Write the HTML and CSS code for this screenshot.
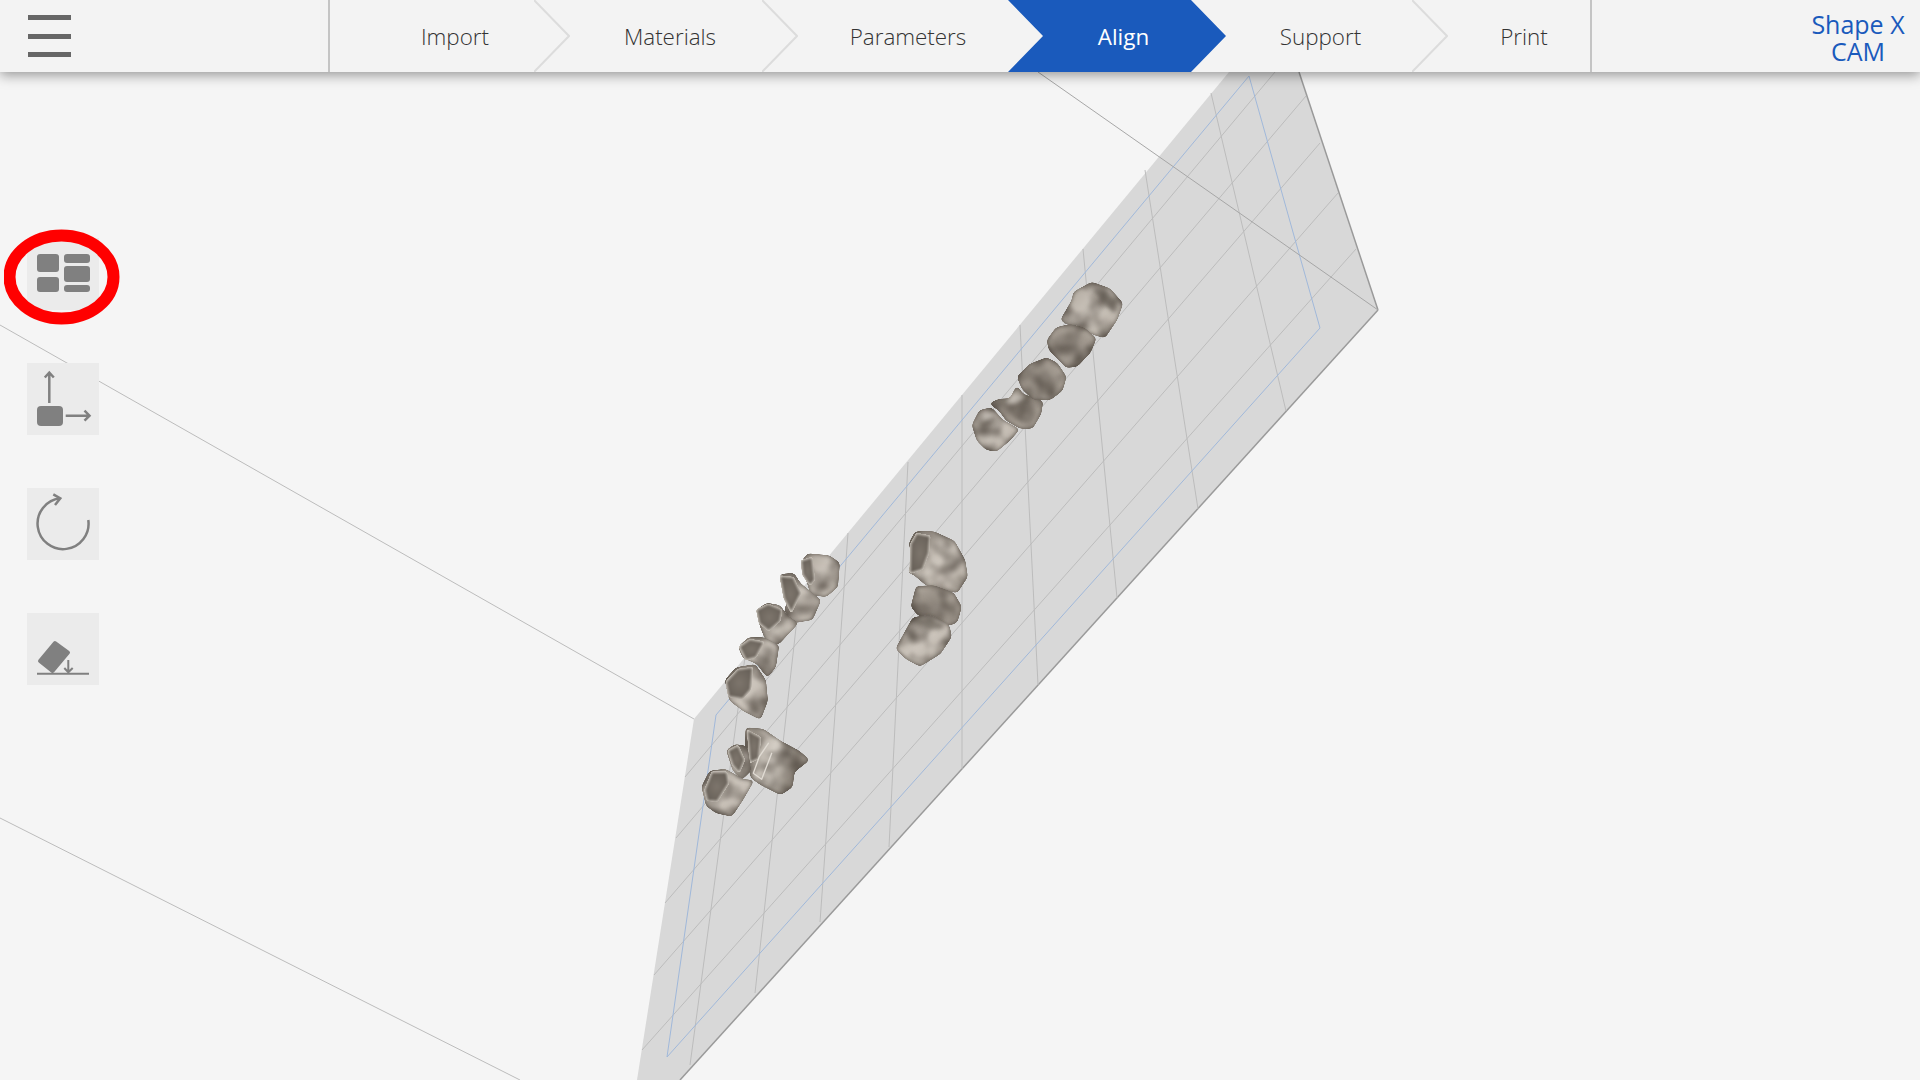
FILE: index.html
```html
<!DOCTYPE html>
<html lang="en">
  <head>
    <meta charset="UTF-8" />
    <title>Shape X CAM</title>
    <link rel="stylesheet" href="styles.css">
  </head>
  <body>
    <header class="topbar">
      <button class="menu-btn" aria-label="Menu">
        <span class="menu-bar"></span>
        <span class="menu-bar"></span>
        <span class="menu-bar"></span>
      </button>
      <nav class="steps">
        <div class="step step-import">Import</div>
        <svg class="chevron" viewBox="0 0 36 72"><polyline points="0,0 35,36 0,72" /></svg>
        <div class="step step-materials">Materials</div>
        <svg class="chevron" viewBox="0 0 36 72"><polyline points="0,0 35,36 0,72" /></svg>
        <div class="step step-parameters">Parameters</div>
        <div class="step step-align">Align</div>
        <div class="step step-support">Support</div>
        <svg class="chevron" viewBox="0 0 36 72"><polyline points="0,0 35,36 0,72" /></svg>
        <div class="step step-print">Print</div>
      </nav>
      <div class="brand"><div class="brand-name">Shape X CAM</div></div>
    </header>

    <!-- 3d scene -->
    <svg class="scene" viewBox="0 0 1920 1080">
      <defs>
        <!-- rounds the polygon corners, adds faint blotches and a dark inner edge -->
        <filter id="tooth" x="-15%" y="-15%" width="130%" height="130%" color-interpolation-filters="sRGB">
          <feGaussianBlur in="SourceGraphic" stdDeviation="6" result="blur" />
          <feColorMatrix in="blur" type="matrix" values="1 0 0 0 0  0 1 0 0 0  0 0 1 0 0  0 0 0 14 -6.500" result="shape" />
          <feTurbulence type="fractalNoise" baseFrequency="0.018" numOctaves="2" seed="11" result="noise" />
          <feColorMatrix in="noise" type="matrix" values="0 0 0 0 0.30  0 0 0 0 0.27  0 0 0 0 0.24  1.600 0 0 0 -0.550" result="spots" />
          <feGaussianBlur in="spots" stdDeviation="4" result="spotsSoft" />
          <feComposite in="spotsSoft" in2="shape" operator="in" result="blotch" />
          <feGaussianBlur in="shape" stdDeviation="7" result="edgeBlur" />
          <feColorMatrix in="edgeBlur" type="matrix" values="0 0 0 0 0.30  0 0 0 0 0.27  0 0 0 0 0.24  0 0 0 -0.850 0.850" result="edgeDark" />
          <feComposite in="edgeDark" in2="shape" operator="in" result="edge" />
          <feMerge result="all">
            <feMergeNode in="shape" />
            <feMergeNode in="blotch" />
            <feMergeNode in="edge" />
          </feMerge>
          <feGaussianBlur in="all" stdDeviation="1.200" />
        </filter>
        <filter id="hollow" x="-20%" y="-20%" width="140%" height="140%" color-interpolation-filters="sRGB">
          <feGaussianBlur in="SourceGraphic" stdDeviation="3" result="blur" />
          <feColorMatrix in="blur" type="matrix" values="1 0 0 0 0  0 1 0 0 0  0 0 1 0 0  0 0 0 12 -5.500" result="shape" />
          <feGaussianBlur in="shape" stdDeviation="1" />
        </filter>
        <filter id="soft" x="-40%" y="-40%" width="180%" height="180%"><feGaussianBlur stdDeviation="7" /></filter>
        <radialGradient id="toothA" cx="0.45" cy="0.5" r="0.65">
          <stop offset="0" stop-color="#8a8279" />
          <stop offset="0.65" stop-color="#a69e94" />
          <stop offset="1" stop-color="#bdb5ab" />
        </radialGradient>
        <linearGradient id="toothB" x1="0" y1="0" x2="1" y2="1">
          <stop offset="0" stop-color="#a69e94" />
          <stop offset="0.5" stop-color="#cdc6bd" />
          <stop offset="1" stop-color="#aea69c" />
        </linearGradient>
        <linearGradient id="toothC" x1="0" y1="0.2" x2="1" y2="0.5">
          <stop offset="0" stop-color="#a0988e" />
          <stop offset="0.45" stop-color="#d6d0c7" />
          <stop offset="0.8" stop-color="#888076" />
          <stop offset="1" stop-color="#aca49a" />
        </linearGradient>
        <radialGradient id="inside" cx="0.5" cy="0.5" r="0.6">
          <stop offset="0" stop-color="#7d756c" />
          <stop offset="1" stop-color="#665f57" />
        </radialGradient>
      </defs>

      <line class="axis" x1="0" y1="325" x2="694" y2="719" />
      <line class="axis" x1="0" y1="818" x2="520" y2="1080" />

      <polygon class="plate" points="1229,72 1299,72 1378,310 680,1080 637,1080 694,719" />
      <line class="plate-edge" x1="1299" y1="72" x2="1378" y2="310" />
      <line class="plate-edge" x1="1378" y1="310" x2="680" y2="1080" />

      <g class="grid">
        <line x1="642" y1="1050" x2="1356" y2="249" />
        <line x1="654" y1="975" x2="1338" y2="193" />
        <line x1="665" y1="903" x2="1320" y2="143" />
        <line x1="676" y1="838" x2="1306" y2="96" />
        <line x1="685" y1="777" x2="1275" y2="72" />
        <line x1="690" y1="1065" x2="745" y2="657" />
        <line x1="755" y1="993" x2="800" y2="592" />
        <line x1="820" y1="922" x2="848" y2="533" />
        <line x1="889" y1="847" x2="908" y2="462" />
        <line x1="962" y1="769" x2="962" y2="395" />
        <line x1="1038" y1="685" x2="1020" y2="325" />
        <line x1="1117" y1="598" x2="1083" y2="249" />
        <line x1="1198" y1="509" x2="1145" y2="170" />
        <line x1="1286" y1="411" x2="1211" y2="93" />
      </g>
      <polygon class="bounds" points="1249,76 1320,328 667,1057 716,715" />
      <line class="axis-dark" x1="1038" y1="72" x2="1378" y2="310" />

      <!-- back row -->
      <g transform="translate(960 270) scale(0.3333)">
        <polygon class="t-b" filter="url(#tooth)" points="340,65 395,35 450,55 490,100 472,150 435,205 400,195 350,165 322,165 300,150 318,120 335,90" />
        <polygon class="shade" filter="url(#soft)" points="400,55 470,90 462,130 425,90" />
        <polygon class="t-b" filter="url(#tooth)" points="35,465 58,420 95,412 130,450 180,478 150,512 110,545 78,540 50,512" />
        <polygon class="t-a" filter="url(#tooth)" points="150,385 170,345 190,372 250,392 244,432 218,476 180,476 138,452 118,424 85,400 118,386" />
        <polygon class="t-a" filter="url(#tooth)" points="170,320 208,282 260,262 292,278 320,320 308,362 272,390 220,390 186,358" />
        <polygon class="t-a" filter="url(#tooth)" points="260,210 288,172 330,162 372,172 410,205 392,248 352,290 318,294 288,262 266,240" />
        <polygon class="shine" filter="url(#soft)" points="70,425 105,430 90,450 65,452" />
        <polygon class="shine" filter="url(#soft)" points="160,365 195,380 170,400 140,400" />
      </g>

      <!-- left strip, bottom group, right group -->
      <g transform="translate(700 530) scale(0.3333)">
        <polygon class="t-b" filter="url(#tooth)" points="300,100 322,70 388,76 420,98 414,172 378,202 332,194 318,150" />
        <polygon class="cavity" filter="url(#hollow)" points="304,92 336,82 344,150 330,166 308,134" />

        <polygon class="t-b" filter="url(#tooth)" points="236,133 282,128 302,160 364,210 338,270 280,280 252,242 266,200" />
        <polygon class="cavity" filter="url(#hollow)" points="240,138 280,142 302,190 274,248 252,204" />

        <polygon class="t-b" filter="url(#tooth)" points="196,330 235,345 296,280 262,255 240,225 200,218 168,240 180,290" />
        <polygon class="cavity" filter="url(#hollow)" points="170,240 205,222 246,240 240,274 206,302 178,280" />

        <polygon class="t-b" filter="url(#tooth)" points="114,350 145,322 192,322 238,345 228,412 202,444 170,402 128,384" />
        <polygon class="cavity" filter="url(#hollow)" points="118,350 150,328 192,336 168,382 138,390" />

        <polygon class="t-b" filter="url(#tooth)" points="74,450 108,412 166,402 198,450 204,512 182,570 130,544 88,512" />
        <polygon class="cavity" filter="url(#hollow)" points="78,456 113,418 158,412 152,478 128,506 86,500" />

        <polygon class="t-c" filter="url(#tooth)" points="136,592 190,596 242,632 298,662 330,690 284,726 278,772 242,796 180,764 152,744 136,670" />
        <polygon class="cavity" filter="url(#hollow)" points="142,600 182,622 176,686 150,698" />
        <polyline class="ridge" points="205,640 178,680 160,730 185,748 215,670" />

        <polygon class="t-b" filter="url(#tooth)" points="78,660 105,642 142,648 154,722 126,750 98,722" />
        <polygon class="cavity" filter="url(#hollow)" points="84,662 114,646 134,690 118,728 98,706" />

        <polygon class="t-b" filter="url(#tooth)" points="4,770 28,722 76,716 132,748 164,750 128,812 96,860 48,850 18,828" />
        <polygon class="cavity" filter="url(#hollow)" points="14,780 36,726 80,726 86,760 52,814 22,812" />

        <polygon class="t-b" filter="url(#tooth)" points="626,40 645,4 702,4 764,32 796,90 804,140 772,190 720,178 680,168 640,134 622,128 638,90" />
        <polygon class="cavity" filter="url(#hollow)" points="632,42 650,10 690,18 686,70 668,118 630,130" />
        <polygon class="t-a" filter="url(#tooth)" points="648,168 702,166 762,188 786,230 772,278 745,288 700,264 655,258 632,230" />
        <polygon class="t-b" filter="url(#tooth)" points="586,356 638,262 690,254 748,284 756,320 722,372 660,410 618,388" />
        <polygon class="shade" filter="url(#soft)" points="640,270 690,262 740,292 690,300" />
      </g>
    </svg>

    <aside class="tools">
      <button class="tool tool-selected">
        <svg viewBox="0 0 72 72">
          <rect class="solid" x="10" y="16" width="22" height="18" rx="3" />
          <rect class="solid" x="10" y="39" width="22" height="15" rx="3" />
          <rect class="solid" x="37" y="16" width="26" height="9" rx="3" />
          <rect class="solid" x="37" y="28" width="26" height="16" rx="3" />
          <rect class="solid" x="37" y="47" width="26" height="7" rx="3" />
        </svg>
      </button>
      <button class="tool">
        <svg viewBox="0 0 72 72">
          <rect class="solid" x="10" y="43" width="26" height="20" rx="4" />
          <path class="stroke" d="M22.3 40V9.5M17.8 14.5l4.5-5 4.5 5" />
          <path class="stroke" d="M38.7 52.7H62M57.5 47.7l5 5-5 5" />
        </svg>
      </button>
      <button class="tool">
        <svg viewBox="0 0 72 72">
          <path class="stroke" d="M61.3 32A25.5 25.5 0 1 1 33 10.3" />
          <path class="stroke" d="M26.3 6.3l7 4-5.300 6.700" />
        </svg>
      </button>
      <button class="tool">
        <svg viewBox="0 0 72 72">
          <polygon class="solid rounded" points="28,30 41,39.500 25.500,58 13,48" />
          <path class="stroke thin" d="M10 60.700H62" />
          <path class="stroke thin" d="M41.300 47V59M37.300 55l4 4.300 4.400-4.300" />
        </svg>
      </button>
    </aside>

    <svg class="highlight" viewBox="0 0 120 100">
      <ellipse cx="57.500" cy="50" rx="52" ry="41.500" />
    </svg>
  </body>
</html>
```
FILE: styles.css
```css
* {
  box-sizing: border-box;
}
body {
  margin: 0;
  height: 1080px;
  overflow: hidden;
  position: relative;
  background-color: #f5f5f5;
  font-family: "Open Sans", "Liberation Sans", sans-serif;
}
.topbar {
  position: relative;
  z-index: 2;
  display: flex;
  height: 72px;
  background-color: #f3f3f3;
  box-shadow: 0 3px 12px rgba(0, 0, 0, 0.4);
}
.menu-btn {
  width: 328px;
  flex: none;
  display: flex;
  flex-direction: column;
  align-items: flex-start;
  gap: 13.500px;
  padding: 15px 0 0 28px;
  background: none;
  border: none;
}
.menu-bar {
  display: block;
  width: 43px;
  height: 5px;
  background-color: #666;
}
.steps {
  flex: none;
  display: flex;
  width: 1264px;
  border-left: 2px solid #c4c4c4;
  border-right: 2px solid #c4c4c4;
}
.step {
  flex: none;
  display: flex;
  align-items: center;
  justify-content: center;
  font-size: 22.400px;
  font-weight: 300;
  color: #333;
}
.chevron {
  flex: none;
  width: 36px;
  height: 72px;
  margin-right: -1px;
}
.chevron polyline {
  fill: none;
  stroke: #dcdcdc;
  stroke-width: 2;
}
.step-import {
  width: 204px;
  padding-left: 46px;
}
.step-materials {
  width: 193px;
  padding-left: 9px;
}
.step-parameters {
  width: 211px;
  padding-left: 11px;
}
.step-align {
  width: 218px;
  padding-left: 13px;
  color: #fff;
  font-weight: 400;
  background-color: #1a5abc;
  clip-path: polygon(0 0, 183px 0, 218px 36px, 183px 72px, 0 72px, 35px 36px);
}
.step-support {
  width: 186px;
  padding-left: 3px;
}
.step-print {
  width: 143px;
  padding-left: 11px;
}
.brand {
  flex: 1;
  display: flex;
  justify-content: flex-end;
  padding: 11px 12px 0 0;
}
.brand-name {
  width: 100px;
  text-align: center;
  font-size: 25px;
  line-height: 27px;
  color: #1a5abc;
}
.scene {
  position: absolute;
  top: 0;
  left: 0;
  width: 1920px;
  height: 1080px;
}
.plate {
  fill: #d8d8d8;
}
.plate-edge {
  stroke: #9a9a9a;
  stroke-width: 1.500;
}
.axis {
  stroke: #bcbcbc;
  stroke-width: 1;
}
.axis-dark {
  stroke: #a6a6a6;
  stroke-width: 1;
}
.grid line {
  stroke: #bcbcbc;
  stroke-width: 1;
}
.bounds {
  fill: none;
  stroke: #a0b8da;
  stroke-width: 1;
}
.t-a {
  fill: url(#toothA);
}
.t-b {
  fill: url(#toothB);
}
.t-c {
  fill: url(#toothC);
}
.cavity {
  fill: url(#inside);
  stroke: #d6d0c7;
  stroke-width: 4;
  stroke-linejoin: round;
}
.ridge {
  fill: none;
  stroke: #e0dbd3;
  stroke-width: 4;
  stroke-linejoin: round;
  stroke-linecap: round;
}
.shade {
  fill: #5f5850;
  opacity: 0.6;
}
.shine {
  fill: #e3ded6;
  opacity: 0.6;
}
.tools {
  position: absolute;
  z-index: 1;
  top: 238px;
  left: 27px;
  display: flex;
  flex-direction: column;
  gap: 53px;
}
.tool {
  display: block;
  width: 72px;
  height: 72px;
  padding: 0;
  border: none;
  background-color: #ebebeb;
}
.tool svg {
  display: block;
  width: 72px;
  height: 72px;
}
.solid {
  fill: #808080;
}
.rounded {
  stroke: #808080;
  stroke-width: 4;
  stroke-linejoin: round;
}
.stroke {
  fill: none;
  stroke: #808080;
  stroke-width: 2.500;
}
.thin {
  stroke-width: 2;
}
.highlight {
  position: absolute;
  z-index: 1;
  top: 227px;
  left: 4px;
  width: 120px;
  height: 100px;
}
.highlight ellipse {
  fill: none;
  stroke: #ff0000;
  stroke-width: 12;
}
```
